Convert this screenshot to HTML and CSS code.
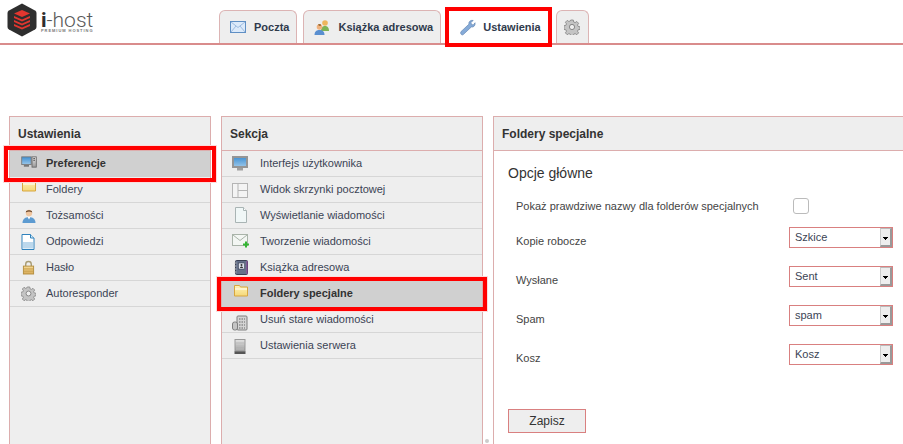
FILE: index.html
```html
<!DOCTYPE html>
<html lang="pl">
<head>
<meta charset="utf-8">
<title>i-host</title>
<link rel="stylesheet" href="styles.css">
</head>
<body>
<svg class="defs" width="0" height="0">
  <defs>
    <linearGradient id="fold" x1="0" y1="0" x2="0" y2="1"><stop offset="0" stop-color="#fff3b8"/><stop offset="1" stop-color="#f5d878"/></linearGradient>
    <linearGradient id="scr" x1="0" y1="0" x2="0" y2="1"><stop offset="0" stop-color="#3f8fd2"/><stop offset="1" stop-color="#9cc8ea"/></linearGradient>
    <linearGradient id="metal" x1="0" y1="0" x2="0" y2="1"><stop offset="0" stop-color="#e4e4e4"/><stop offset="1" stop-color="#9a9a9a"/></linearGradient>
    <linearGradient id="gold" x1="0" y1="0" x2="0" y2="1"><stop offset="0" stop-color="#f6dc98"/><stop offset="1" stop-color="#d8aa58"/></linearGradient>
    <symbol id="i-folder" viewBox="0 0 16 16"><path d="M1.500 2.500h5l1 1.500h7v9h-13z" fill="url(#fold)" stroke="#d8a63e"/><path d="M2 6h12" stroke="#fff" stroke-width="1"/></symbol>
    <symbol id="i-gear" viewBox="0 0 16 16"><path d="M6.700 1h2.600l.4 2 1.400.6 1.700-1.100 1.800 1.800-1.100 1.700.6 1.400 2 .4v2.600l-2 .4-.6 1.400 1.100 1.700-1.800 1.800-1.700-1.100-1.400.6-.4 2H6.700l-.4-2-1.400-.6-1.700 1.100-1.800-1.800 1.100-1.700-.6-1.400-2-.4V6.700l2-.4.6-1.400-1.100-1.700 1.800-1.800 1.700 1.100 1.400-.6z" fill="#c4c4c4" stroke="#808080" stroke-width=".8"/><circle cx="8" cy="8" r="2.600" fill="#eee" stroke="#707070" stroke-width=".8"/></symbol>
  </defs>
</svg>
<header class="topbar">
  <div class="logo">
    <svg class="logo-mark" width="32" height="36" viewBox="0 0 32 36"><path d="M16 1.500 29 8.500a3 3 0 0 1 1.500 2.500v14a3 3 0 0 1-1.500 2.500L16 34.500 3 27.500A3 3 0 0 1 1.500 25V11A3 3 0 0 1 3 8.500z" fill="#2e2e2e"/><g fill="#e2362f"><path d="M16 8l8 3.500-8 3.500-8-3.500z"/><path d="M8 14l8 3.500 8-3.500v2l-8 3.500L8 16z"/><path d="M8 18l8 3.500 8-3.500v2l-8 3.500L8 20z"/><path d="M8 22l8 3.500 8-3.500v2l-8 3.500L8 24z"/></g></svg>
    <div class="logo-text">
      <div class="logo-name"><b>i</b>-host</div>
      <div class="logo-sub">PREMIUM HOSTING</div>
    </div>
  </div>
  <nav class="tabs">
    <a class="tab">
      <svg width="16" height="12" viewBox="0 0 16 12"><rect x=".5" y=".5" width="15" height="11" fill="#dceafa" stroke="#5f8fc4"/><path d="M1 1l7 5.500L15 1M1 11l5-6M15 11l-5-6" fill="none" stroke="#9dbce0"/></svg>
      <span>Poczta</span>
    </a>
    <a class="tab">
      <svg width="16" height="16" viewBox="0 0 16 16"><circle cx="11" cy="4" r="2.800" fill="#efb65c"/><path d="M7 12c0-4 2-5 4-5s4 1 4 5z" fill="#7fb455"/><circle cx="5.500" cy="8" r="2.800" fill="#f0b27e"/><path d="M5.500 7C3.500 6 3.500 5 5.500 5s2 1 1 2z" fill="#9a6a32"/><path d="M.5 16c0-4 2.500-5 5-5s5 1 5 5z" fill="#5a8fd0"/></svg>
      <span>Książka adresowa</span>
    </a>
    <a class="tab tab-active">
      <svg width="17" height="17" viewBox="0 0 18 18"><path d="M2 13.500 10.500 5.500c-.5-2.500 1.500-4.500 4.500-4l-2.300 2.300.5 2 2 .5L17 4c.5 3-1.500 5-4 4.500L4.500 16.500c-1.500 1.200-3.500-1-2.500-3z" fill="#86abd8" stroke="#5f83b0" stroke-width=".7"/></svg>
      <span>Ustawienia</span>
    </a>
    <a class="tab tab-icon">
      <svg width="16" height="16"><use href="#i-gear"/></svg>
    </a>
  </nav>
</header>
<main class="columns">
  <section class="panel panel-left">
    <h2 class="panel-head">Ustawienia</h2>
    <ul class="list">
      <li class="row row-sel row-sel-left">
        <svg class="ico ic-pref" width="16" height="12" viewBox="0 0 18 14"><rect x=".5" y="1" width="11" height="9" fill="url(#scr)" stroke="#777"/><rect x="3" y="10.500" width="6" height="2" fill="#777"/><rect x="12.500" y="1" width="5" height="12" fill="url(#metal)" stroke="#666"/><path d="M14 3h2M14 5h2" stroke="#444"/></svg>
        <span>Preferencje</span>
      </li>
      <li class="row"><svg class="ico ic-folder" width="16" height="16"><use href="#i-folder"/></svg><span>Foldery</span></li>
      <li class="row">
        <svg class="ico" width="16" height="16" viewBox="0 0 16 16"><circle cx="8" cy="5" r="3.200" fill="#f0c6a0"/><path d="M4.800 4.500C4.800 1.500 11.200 1.500 11.200 4.500 9.500 3 6.500 3 4.800 4.500z" fill="#5a3a22"/><path d="M1.500 15c0-4 3-6 6.500-6s6.500 2 6.500 6z" fill="#5d9bd1"/><path d="M6.500 9 8 11.500 9.500 9z" fill="#fff"/></svg>
        <span>Tożsamości</span>
      </li>
      <li class="row">
        <svg class="ico" width="14" height="16" viewBox="0 0 14 16"><path d="M1 .5h8.500L13 4v11.500H1z" fill="#fff" stroke="#2f82bd"/><path d="M2 8h10v6.500H2z" fill="#bcd8ec"/><path d="M9.500 .5V4H13" fill="#d6e8f4" stroke="#2f82bd"/></svg>
        <span>Odpowiedzi</span>
      </li>
      <li class="row">
        <svg class="ico ic-lock" width="13" height="15" viewBox="0 0 14 16"><path d="M4 7V4.500a3 3 0 0 1 6 0V7" fill="none" stroke="#a89c74" stroke-width="1.500"/><rect x="1.500" y="6.500" width="11" height="8.500" fill="url(#gold)" stroke="#b38d3e"/><path d="M2 9.500h10M2 12h10" stroke="#c79e4c"/></svg>
        <span>Hasło</span>
      </li>
      <li class="row"><svg class="ico ic-gear" width="15" height="15"><use href="#i-gear"/></svg><span>Autoresponder</span></li>
    </ul>
  </section>

  <section class="panel panel-mid">
    <h2 class="panel-head">Sekcja</h2>
    <ul class="list list-mid">
      <li class="row">
        <svg class="ico" width="16" height="15" viewBox="0 0 16 15"><rect x="1" y="1" width="14" height="10" fill="url(#scr)" stroke="#959595" stroke-width="2"/><rect x="5" y="12" width="6" height="2.500" fill="#a0a0a0"/></svg>
        <span>Interfejs użytkownika</span>
      </li>
      <li class="row">
        <svg class="ico ic-layout" width="16" height="15" viewBox="0 0 16 15"><rect x=".5" y=".5" width="15" height="14" fill="#f4f4f4" stroke="#b5b5b5"/><path d="M6 .5v14M6 7.500h9.500" stroke="#b5b5b5"/></svg>
        <span>Widok skrzynki pocztowej</span>
      </li>
      <li class="row">
        <svg class="ico ic-page" width="12" height="16" viewBox="0 0 12 16"><path d="M.5 .5h8L11.500 3.500v12H.5z" fill="#f0f7f7" stroke="#a9b4b4"/><path d="M8.500 .5v3h3" fill="#fff" stroke="#a9b4b4"/></svg>
        <span>Wyświetlanie wiadomości</span>
      </li>
      <li class="row">
        <svg class="ico" width="17" height="15" viewBox="0 0 17 15"><rect x=".5" y=".5" width="15" height="11" fill="#f3f6f3" stroke="#a9b3a9"/><path d="M1 1l7 5.500L15 1" fill="none" stroke="#a9b3a9"/><path d="M11 9.500h2v-2h2v2h2v2h-2v2h-2v-2h-2z" fill="#35b534"/></svg>
        <span>Tworzenie wiadomości</span>
      </li>
      <li class="row">
        <svg class="ico ic-book" width="14" height="15" viewBox="0 0 14 15"><rect x="1.500" y=".5" width="12" height="14" rx="1" fill="#66718a" stroke="#3a4054"/><path d="M13 1v13" stroke="#9a4fa0"/><rect x="4.500" y="3" width="6" height="6" fill="#dfe3ee" stroke="#2f3444" stroke-width=".5"/><circle cx="7.500" cy="5" r="1" fill="#333"/><path d="M6 8c0-2 3-2 3 0z" fill="#333"/><path d="M.5 3h2M.5 6h2M.5 9h2M.5 12h2" stroke="#bbb"/></svg>
        <span>Książka adresowa</span>
      </li>
      <li class="row row-sel row-sel-mid"><svg class="ico ic-folder-mid" width="16" height="16"><use href="#i-folder"/></svg><span>Foldery specjalne</span></li>
      <li class="row">
        <svg class="ico ic-trash" width="16" height="16" viewBox="0 0 16 16"><rect x="5" y="1" width="10" height="14" rx="1" fill="#d4d4d4" stroke="#7e7e7e"/><path d="M7 4h6M7 7h6M7 10h6M7 13h6" stroke="#666" stroke-dasharray="1.500 1"/><rect x=".5" y="7" width="5" height="8" rx="2" fill="#c4c4c4" stroke="#7e7e7e"/></svg>
        <span>Usuń stare wiadomości</span>
      </li>
      <li class="row">
        <svg class="ico ic-server" width="12" height="15" viewBox="0 0 12 15"><rect x="1" y=".5" width="10" height="12" fill="url(#metal)" stroke="#999"/><path d="M2 4h8M2 7h8M2 10h8" stroke="#bbb"/><rect x=".5" y="12.500" width="11" height="2.500" fill="#555"/></svg>
        <span>Ustawienia serwera</span>
      </li>
    </ul>
    <span class="splitter"></span>
  </section>

  <section class="panel panel-right">
    <h2 class="panel-head">Foldery specjalne</h2>
    <form class="form">
      <h3 class="form-title">Opcje główne</h3>
      <div class="grid">
        <label class="lbl lbl-check">Pokaż prawdziwe nazwy dla folderów specjalnych</label>
        <span class="checkbox"></span>
        <label class="lbl">Kopie robocze</label>
        <div class="sel"><select><option>Szkice</option></select></div>
        <label class="lbl">Wysłane</label>
        <div class="sel"><select><option>Sent</option></select></div>
        <label class="lbl">Spam</label>
        <div class="sel"><select><option>spam</option></select></div>
        <label class="lbl">Kosz</label>
        <div class="sel"><select><option>Kosz</option></select></div>
      </div>
      <button type="button" class="save">Zapisz</button>
    </form>
  </section>
</main>
</body>
</html>
```
FILE: styles.css
```css
* { box-sizing: border-box; }
html, body { margin: 0; height: 100%; overflow: hidden; background: #fff; }
body { font: 11px "Liberation Sans", Arial, sans-serif; color: #3b4455; }
.defs { position: absolute; }

.topbar { display: flex; height: 45px; border-bottom: 2px solid #d98c8c; }
.logo { width: 219px; display: flex; align-items: flex-start; padding: 2px 0 0 6px; gap: 3px; }
.logo-mark { flex: none; }
.logo-text { color: #5a5a5a; margin-top: 9px; }
.logo-name { font: 300 21px/18px Roboto, sans-serif; }
.logo-name b { font-weight: 700; color: #2e2e2e; }
.logo-sub { font: 700 4px/4px "Liberation Sans", sans-serif; letter-spacing: .95px; color: #777; }

.tabs { display: flex; gap: 6px; padding-top: 10px; }
.tab { display: flex; align-items: center; gap: 8px; height: 33px; padding: 0 7px 0 10px; background: #eee; border: 1px solid #dcb4b4; border-bottom: 0; border-radius: 6px 6px 0 0; font-weight: 700; color: #2f3a4c; }
.tab-active { position: relative; background: #fff; border: 0; border-radius: 0; margin: 1px 2px 0; width: 99px; height: 32px; padding: 0 0 0 10px; gap: 7px; z-index: 2; outline: 4px solid #f00; }
.tab-icon { padding: 0 8px 0 7px; }

.columns { display: flex; gap: 10px; padding: 71px 0 0 9px; height: 380px; }
.panel { position: relative; border: 1px solid #dcadad; background: #eee; height: 340px; }
.panel-left { width: 202px; }
.panel-mid { width: 262px; }
.panel-right { flex: 1; background: #fff; border-right: 0; }
.panel-head { margin: 0; height: 34px; padding-left: 8px; font-size: 12px; line-height: 34px; font-weight: 700; color: #333; background: #eee; border-bottom: 1px solid #dcadad; }

.list { list-style: none; margin: 0; padding: 0; }
.row { position: relative; display: grid; grid-template-columns: 36px 1fr; align-items: center; height: 26px; border-bottom: 1px solid #d6d6d6; }
.row span { padding-bottom: 2px; }
.list-mid .row { grid-template-columns: 38px 1fr; }
.ico { align-self: start; margin: 5px 0 0 11px; }
.list-mid .ico { margin-left: 10px; }
.ic-folder { margin-top: 1px; }
.ic-lock { margin-left: 12px; }
.list-mid .ic-page { margin: 4px 0 0 13px; }
.list-mid .ic-layout { margin-top: 6px; }
.list-mid .ic-book { margin-left: 12px; }
.list-mid .ic-folder-mid { margin: 2px 0 0 11px; }
.list-mid .ic-trash { margin-top: 8px; }
.list-mid .ic-server { margin: 6px 0 0 12px; }
.row-sel { background: #d0d0d0; font-weight: 700; color: #333; border-bottom: 0; }
.row-sel::after { content: ""; position: absolute; border: 4px solid #f00; box-shadow: 0 0 0 1px #fbdcdc; z-index: 2; }
.row-sel-left::after { inset: -5px -6px -5px -6px; }
.row-sel-mid::after { inset: -4px -5px -4px -5px; }
.splitter { position: absolute; right: -7px; bottom: 12px; width: 4px; height: 4px; border-radius: 50%; background: #ccc; }

.form { padding: 14px 0 0 14px; }
.form-title { margin: 0; font-size: 14px; line-height: 16px; font-weight: 400; color: #333; }
.grid { display: grid; grid-template-columns: 273px 104px; grid-template-rows: 29px 39px 39px 39px 21px; padding: 17px 0 0 8px; }
.lbl { padding-top: 7px; line-height: 14px; color: #444; }
.lbl-check { padding-top: 1px; }
.checkbox { width: 16px; height: 16px; margin-left: 4px; border: 1px solid #bbb; border-radius: 3px; background: #fff; }
.sel { position: relative; height: 21px; }
.sel select { appearance: none; display: block; width: 100%; height: 21px; padding: 0 0 2px 5px; border: 1px solid #d98080; border-radius: 0; background: #fff; font: 11px "Liberation Sans", Arial, sans-serif; color: #3b4455; }
.sel::after { content: ""; position: absolute; top: 1px; right: 1px; bottom: 1px; width: 9px; background: linear-gradient(#000, #000) 2px 8px / 5px 1px no-repeat, linear-gradient(#000, #000) 3px 9px / 3px 1px no-repeat, linear-gradient(#000, #000) 4px 10px / 1px 1px no-repeat, #eee; border-left: 1px solid #ccc; border-top: 1px solid #bbb; border-right: 2px solid #999; border-bottom: 2px solid #999; pointer-events: none; }
.save { display: block; width: 78px; height: 24px; margin-top: 44px; padding: 0; border: 1px solid #d98080; background: #eee; font: 12px "Liberation Sans", Arial, sans-serif; color: #333; }
```
